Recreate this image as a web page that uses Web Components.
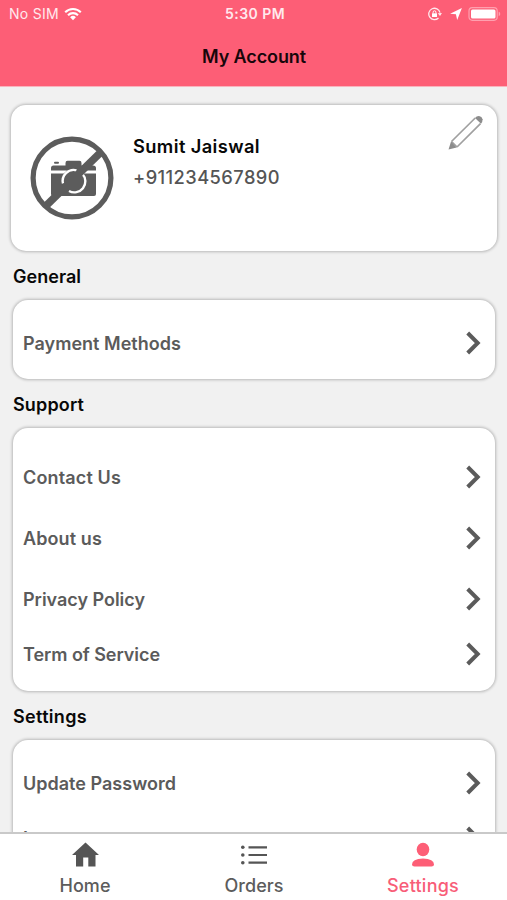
<!DOCTYPE html>
<html lang="en">
<head>
<meta charset="utf-8">
<title>My Account</title>
<style>
body{margin:0;background:#f1f1f1;font-family:Inter,"Liberation Sans",sans-serif;font-weight:600;color:#5b5b5b}
</style>
</head>
<body>
<account-app></account-app>
<script>
const define = (name, html) => customElements.define(name, class extends HTMLElement {
  constructor() {
    super();
    const t = document.createElement('template');
    t.innerHTML = html;
    this.attachShadow({ mode: 'open' }).append(t.content.cloneNode(true));
  }
});

// A line of text fitted to a given advance width.
customElements.define('fit-text', class extends HTMLElement {
  connectedCallback() {
    if (this.shadowRoot) return;
    const root = this.attachShadow({ mode: 'open' });
    root.innerHTML = '<style>:host{display:inline-block;white-space:nowrap}span{display:inline-block}</style><span></span>';
    const s = root.querySelector('span');
    s.textContent = this.getAttribute('text');
    const w = +this.getAttribute('w');
    const extra = (w - s.getBoundingClientRect().width) / s.textContent.length;
    s.style.letterSpacing = extra.toFixed(3) + 'px';
  }
});

define('status-bar', `<style>
:host{display:grid;grid-template-columns:1fr auto 1fr;height:28px;align-items:center;color:#ffe9ed;font-size:14px;padding:0 6px 0 9px;box-sizing:border-box}
.l,.r{display:flex;align-items:center}.l{gap:5px;font-weight:400}.r{justify-content:flex-end}
svg{display:block;margin-top:-1px}fit-text{margin-top:-1px}
</style>
<div class="l"><fit-text text="No SIM" w="50"></fit-text>
<svg width="18" height="14" viewBox="0 0 18 14" fill="none" stroke="#fff" stroke-width="2.1"><path d="M1.2 5.2a11 11 0 0 1 15.6 0M4 8.2a7.1 7.1 0 0 1 10 0"/><path d="M9 13.2 6.1 10.3a4.1 4.1 0 0 1 5.8 0z" fill="#fff" stroke="none"/></svg></div>
<fit-text text="5:30 PM" w="60"></fit-text>
<div class="r">
<svg width="14" height="14" viewBox="0 0 14 14"><path d="M10.5 11A5.7 5.7 0 1 1 12 5.600" fill="none" stroke="#ffe9ed" stroke-width="1.3"/><path d="m9.800 6.200 4.200-.2-2 3z" fill="#ffe9ed"/><path d="M4 6.300h5v3.700H4z" fill="#fff"/><path d="M5.100 6.500V5.200a1.400 1.400 0 0 1 2.800 0v1.300" fill="none" stroke="#fff"/></svg>
<svg width="12" height="12" viewBox="0 0 12 12" style="margin-left:8px"><path d="M11.900.1 7.200 11.900 5.900 6.300.1 5.700z" fill="#fff"/></svg>
<svg width="33" height="14" viewBox="0 0 33 14" style="margin-left:6px"><rect x="1" y=".7" width="28.2" height="12.6" rx="3.2" fill="none" stroke="#ffa0af" stroke-width="1.2"/><rect x="3" y="2.5" width="24.5" height="9" rx="1.5" fill="#fff"/><path d="M30.7 4.8c2 .6 2 3.8 0 4.4z" fill="#ffa0af"/></svg>
</div>`);

define('nav-header', `<style>
:host{display:flex;flex-direction:column;height:87px;background:#fd5e76;flex:none;border-bottom:1px solid #f9b3bd;box-sizing:border-box}
.t{height:56px;display:flex;align-items:center;justify-content:center;padding-left:1px;color:#17060a;font-size:18px}
</style><status-bar></status-bar><div class="t"><slot></slot></div>`);

define('rounded-card', `<style>
:host{display:flex;flex-direction:column;box-sizing:border-box;background:#fff;border-radius:15px;box-shadow:0 0 3px 1px rgba(0,0,0,.24)}
</style><slot></slot>`);

define('no-photo', `<style>:host{display:block;width:84px;height:84px}svg{display:block}</style>
<svg width="84" height="84" viewBox="0 0 84 84" fill="none">
<path fill="#5c5c5c" d="M21 32q0-2.500 2.500-2.500h12V27q0-2.200 2-2.200h12q2 0 2 2.200v2.500H63q3 0 3 2.500v2.600H21z"/><rect x="24" y="25.800" width="5" height="2" rx="1" fill="#5c5c5c"/>
<path fill="#5c5c5c" d="M21 37.500h45V58q0 2-2 2H23q-2 0-2-2z"/>
<circle cx="44" cy="45" r="12.500" fill="#5c5c5c"/>
<path stroke="#fff" stroke-width="2.4" d="M33 47.500A11 11 0 0 1 46.500 34.300M52.500 38A11 11 0 0 1 39 55"/>
<path stroke="#5c5c5c" stroke-width="7.5" d="M15 70.700 70 17"/>
<circle cx="42" cy="42" r="38.9" stroke="#5c5c5c" stroke-width="5.2"/></svg>`);

define('edit-pencil', `<style>:host{display:block}svg{display:block}</style>
<svg width="36" height="36" viewBox="0 0 36 36" fill="none" stroke="#a0a0a0" stroke-width="1.7"><path d="M3.500 26.500 27.200 3M9 32 32.500 8.700M3.500 26.500l5.500 5.500"/><path d="m.5 34.500 2.500-8 5.700 6z" fill="#8c8c8c" stroke="none"/><path d="M27 3q1.500-2 4-1.900 3 .5 3.600 3.200.1 2.500-1.600 4.500z" fill="#8c8c8c" stroke="none"/></svg>`);

define('profile-card', `<style>
:host{display:block;height:146px;margin:0 10px 0 11px}
rounded-card{height:146px}
.row{display:grid;grid-template-columns:84px 1fr 36px;height:100%}
no-photo{margin-top:31px}.row{padding:0 13px 0 19px}
.info{padding:29px 0 0 19px;font-size:18.3px;line-height:24px}
.info div{height:31px}.n{color:#080808}.p{font-weight:500;color:#555}
edit-pencil{margin-top:10px}
</style><rounded-card><div class="row"><no-photo></no-photo><div class="info"><div class="n"><fit-text text="Sumit Jaiswal" w="127"></fit-text></div><div class="p"><fit-text text="+911234567890" w="147"></fit-text></div></div><edit-pencil></edit-pencil></div></rounded-card>`);

define('menu-row', `<style>
:host{display:flex;height:30px;align-items:center;justify-content:space-between;padding:0 14px 0 10px;font-size:18px;flex:none}
svg{display:block}
</style><slot></slot><svg width="15" height="24" viewBox="0 0 15 24" fill="none" stroke="#5b5b5b" stroke-width="4"><path d="M1.7 2 11.7 12 1.7 22"/></svg>`);

define('menu-section', `<style>
:host{display:block;margin:0 12px 0 13px}
h2{margin:0;height:48px;display:flex;align-items:center;font-size:18px;font-weight:600;color:#080808}
rounded-card{padding:var(--pad,28px) 0 var(--end,21px)}
</style><h2><slot name="title"></slot></h2><rounded-card><slot></slot></rounded-card>`);

define('tab-item', `<style>
:host{display:flex;flex-direction:column;align-items:center;justify-content:flex-start;padding-top:6px;font-size:18px;font-weight:500;color:#5c5c5c}
:host([active]){color:#f85d78}
.i{height:32px}.t{height:26px;display:flex;align-items:center;padding-left:1px}
</style><div class="i"><slot name="icon"></slot></div><div class="t"><slot></slot></div>`);

define('tab-bar', `<style>
:host{display:grid;grid-template-columns:repeat(3,1fr);height:68px;background:#fff;border-top:2px solid #c9c9c9;box-sizing:border-box;flex:none}
svg{display:block}
</style>
<tab-item><svg slot="icon" width="30" height="30" viewBox="0 0 30 30" fill="#555"><path d="M15.500 2.500 29 15h-3.500V26.500h-7.200v-9h-5.100v9H6V15H2z"/></svg><fit-text text="Home" w="51"></fit-text></tab-item>
<tab-item><svg slot="icon" width="30" height="30" viewBox="0 0 30 30" stroke="#555" stroke-width="2.2"><path d="M9.5 7.300H28M9.500 15H28M9.500 22.700H28"/><g fill="#555" stroke="none"><circle cx="3.8" cy="7.3" r="1.8"/><circle cx="3.8" cy="15" r="1.8"/><circle cx="3.8" cy="22.7" r="1.8"/></g></svg><fit-text text="Orders" w="59"></fit-text></tab-item>
<tab-item active><svg slot="icon" width="30" height="30" viewBox="0 0 30 30" fill="#fd5e76"><ellipse cx="15" cy="9.500" rx="6.3" ry="6.7"/><path d="M4 24.500q0-5.500 11-6 11 .5 11 6 0 2-2.500 2h-17Q4 26.500 4 24.500"/></svg><fit-text text="Settings" w="72"></fit-text></tab-item>`);

define('account-app', `<style>
:host{display:flex;flex-direction:column;height:900px;width:507px;overflow:hidden}
main{flex:1;min-height:0;overflow:hidden;padding-top:18px;box-sizing:border-box}
.first{margin-top:1px}.support{--pad:34px;--end:22px}.g31{margin-top:31px}.g25{margin-top:25px}
menu-section{margin-bottom:1px}
</style>
<nav-header><fit-text text="My Account" w="104"></fit-text></nav-header>
<main>
<profile-card></profile-card>
<menu-section class="first"><fit-text slot="title" text="General" w="68"></fit-text>
<menu-row><fit-text text="Payment Methods" w="158"></fit-text></menu-row></menu-section>
<menu-section class="support"><fit-text slot="title" text="Support" w="71"></fit-text>
<menu-row><fit-text text="Contact Us" w="98"></fit-text></menu-row>
<menu-row class="g31"><fit-text text="About us" w="79"></fit-text></menu-row>
<menu-row class="g31"><fit-text text="Privacy Policy" w="122"></fit-text></menu-row>
<menu-row class="g25"><fit-text text="Term of Service" w="137"></fit-text></menu-row></menu-section>
<menu-section><fit-text slot="title" text="Settings" w="74"></fit-text>
<menu-row><fit-text text="Update Password" w="153"></fit-text></menu-row>
<menu-row class="g25"><fit-text text="Logout" w="62"></fit-text></menu-row></menu-section>
</main>
<tab-bar></tab-bar>`);
</script>
</body>
</html>
